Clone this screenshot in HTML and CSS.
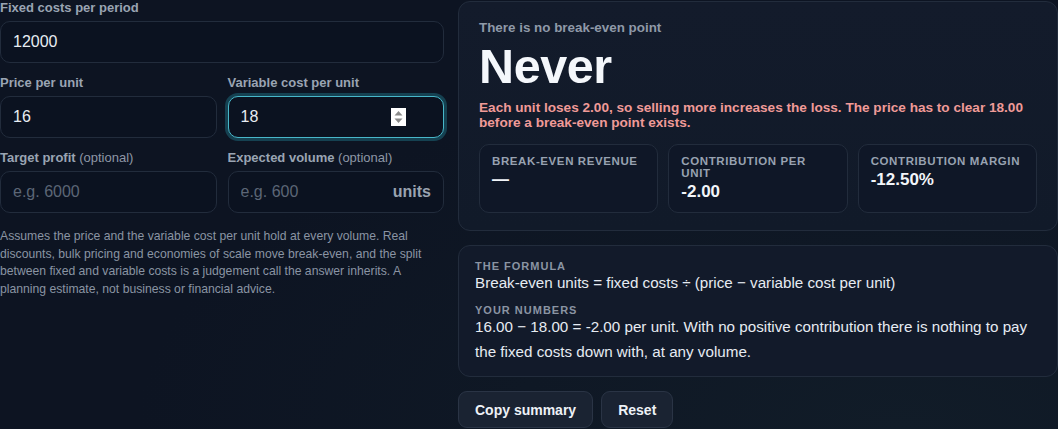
FILE: index.html
```html
<!DOCTYPE html>
<html lang="en">
<head>
    <meta charset="UTF-8">
    <meta name="viewport" content="width=device-width, initial-scale=1.0">
    <title>Break-even calculator</title>
    <link rel="stylesheet" href="styles.css">
</head>
<body>
    <div class="layout">
        <div class="inputs">
            <div class="field">
                <label class="field-label" for="fixed">Fixed costs per period</label>
                <div class="field-box">
                    <input id="fixed" type="text" value="12000">
                </div>
            </div>

            <div class="field-row">
                <div class="field">
                    <label class="field-label" for="price">Price per unit</label>
                    <div class="field-box">
                        <input id="price" type="text" value="16">
                    </div>
                </div>
                <div class="field">
                    <label class="field-label" for="variable">Variable cost per unit</label>
                    <div class="field-box is-focused">
                        <input id="variable" type="text" value="18">
                        <span class="spinner">
                            <svg width="15" height="18" viewBox="0 0 15 18">
                                <rect width="15" height="18" fill="#fff"/>
                                <path d="M3.5 7.5 L7.5 3 L11.5 7.5 Z" fill="#8a8a8a"/>
                                <path d="M3.5 10.5 L7.5 15 L11.5 10.5 Z" fill="#8a8a8a"/>
                            </svg>
                        </span>
                    </div>
                </div>
            </div>

            <div class="field-row">
                <div class="field">
                    <label class="field-label" for="target">Target profit <span class="optional">(optional)</span></label>
                    <div class="field-box">
                        <input id="target" type="text" placeholder="e.g. 6000">
                    </div>
                </div>
                <div class="field">
                    <label class="field-label" for="volume">Expected volume <span class="optional">(optional)</span></label>
                    <div class="field-box">
                        <input id="volume" type="text" placeholder="e.g. 600">
                        <span class="suffix">units</span>
                    </div>
                </div>
            </div>

            <p class="note">Assumes the price and the variable cost per unit hold at every volume. Real discounts, bulk pricing and economies of scale move break-even, and the split between fixed and variable costs is a judgement call the answer inherits. A planning estimate, not business or financial advice.</p>
        </div>

        <div class="results">
            <div class="card result-card">
                <div class="result-kicker">There is no break-even point</div>
                <div class="result-big">Never</div>
                <p class="result-warning">Each unit loses 2.00, so selling more increases the loss. The price has to clear 18.00 before a break-even point exists.</p>
                <div class="stats">
                    <div class="stat">
                        <div class="stat-label">Break-even revenue</div>
                        <div class="stat-value">—</div>
                    </div>
                    <div class="stat">
                        <div class="stat-label">Contribution per unit</div>
                        <div class="stat-value">-2.00</div>
                    </div>
                    <div class="stat">
                        <div class="stat-label">Contribution margin</div>
                        <div class="stat-value">-12.50%</div>
                    </div>
                </div>
            </div>

            <div class="card formula-card">
                <div class="formula-label">The formula</div>
                <p class="formula-text">Break-even units = fixed costs ÷ (price − variable cost per unit)</p>
                <div class="formula-label numbers-label">Your numbers</div>
                <p class="numbers-text">16.00 − 18.00 = -2.00 per unit. With no positive contribution there is nothing to pay the fixed costs down with, at any volume.</p>
            </div>

            <div class="actions">
                <button class="btn">Copy summary</button>
                <button class="btn">Reset</button>
            </div>
        </div>
    </div>
</body>
</html>
```

FILE: styles.css
```css
* {
    box-sizing: border-box;
}

body {
    margin: 0;
    font-family: "Liberation Sans", Arial, sans-serif;
    color: #e6ebf2;
    background: #0d1422;
    background-image: radial-gradient(ellipse at 85% 100%, #111c28 0%, rgba(13, 20, 34, 0) 60%);
    height: 429px;
    overflow: hidden;
}

.layout {
    display: grid;
    grid-template-columns: 444px 600px;
    gap: 14px;
    align-items: start;
}

/* left column */

.inputs {
    min-width: 0;
}

.field {
    display: flex;
    flex-direction: column;
    min-width: 0;
    margin-bottom: 12px;
}

.field-row {
    display: grid;
    grid-template-columns: minmax(0, 1fr) minmax(0, 1fr);
    gap: 11px;
}

.field-label {
    font-size: 13px;
    line-height: 16px;
    font-weight: bold;
    color: #9aa4b3;
    margin: 0 0 5px;
}

.optional {
    font-weight: normal;
    color: #8d97a6;
}

.field-box {
    display: flex;
    align-items: center;
    height: 42px;
    border: 1px solid #222c3c;
    border-radius: 10px;
    background: #0b1220;
    padding: 0 12px;
}

.field-box.is-focused {
    border-color: #48b6c9;
    box-shadow: 0 0 0 3px rgba(32, 120, 140, 0.45);
}

.field-box input {
    flex: 1;
    width: 0;
    min-width: 0;
    border: none;
    outline: none;
    background: transparent;
    color: #e8edf3;
    font-family: inherit;
    font-size: 16px;
    padding: 0;
}

.field-box input::placeholder {
    color: #5c6676;
}

.spinner {
    display: flex;
    margin-right: 25px;
}

.suffix {
    font-size: 16px;
    font-weight: bold;
    color: #9aa3b0;
}

.note {
    margin: 3px 0 0;
    font-size: 12.2px;
    line-height: 17.5px;
    color: #8a94a3;
}

/* right column */

.results {
    padding-top: 1px;
}

.card {
    border: 1px solid #222c3c;
    border-radius: 12px;
    background: #121a2a;
}

.result-card {
    padding: 18px 20px 17px 20px;
    background: linear-gradient(180deg, #131b2b 0%, #111a29 100%);
}

.result-kicker {
    font-size: 13.4px;
    line-height: 16px;
    font-weight: bold;
    color: #8f99a8;
}

.result-big {
    margin-top: 6px;
    font-size: 48.5px;
    line-height: 48px;
    font-weight: bold;
    color: #f4f7fb;
    letter-spacing: -0.4px;
}

.result-warning {
    margin: 10px 0 0;
    font-size: 13.6px;
    line-height: 15px;
    font-weight: bold;
    color: #f09a98;
}

.stats {
    margin-top: 14px;
    display: grid;
    grid-template-columns: repeat(3, minmax(0, 1fr));
    gap: 10px;
}

.stat {
    border: 1px solid #222c3c;
    border-radius: 10px;
    background: #0f1727;
    padding: 10px 12px;
}

.stat-label {
    font-size: 11.5px;
    line-height: 12px;
    font-weight: bold;
    text-transform: uppercase;
    letter-spacing: 0.6px;
    color: #98a2b1;
}

.stat-value {
    margin-top: 3px;
    font-size: 17px;
    line-height: 20px;
    font-weight: bold;
    color: #f2f5f9;
}

.formula-card {
    margin-top: 14px;
    padding: 13px 16px 12px;
}

.formula-label {
    font-size: 11px;
    line-height: 14px;
    font-weight: bold;
    text-transform: uppercase;
    letter-spacing: 1px;
    color: #8a94a3;
}

.numbers-label {
    margin-top: 11px;
    line-height: 12px;
}

.formula-text {
    margin: 0;
    font-size: 15.2px;
    line-height: 20px;
    color: #e6ebf2;
}

.numbers-text {
    margin: -2px 0 0;
    font-size: 15.2px;
    line-height: 25px;
    color: #e6ebf2;
}

.actions {
    margin-top: 14px;
    display: flex;
    gap: 8px;
}

.btn {
    height: 37px;
    padding: 0 16px;
    border: 1px solid #2a3445;
    border-radius: 9px;
    background: #1a2332;
    color: #eef2f7;
    font-family: inherit;
    font-size: 14px;
    font-weight: bold;
    cursor: pointer;
}
```
